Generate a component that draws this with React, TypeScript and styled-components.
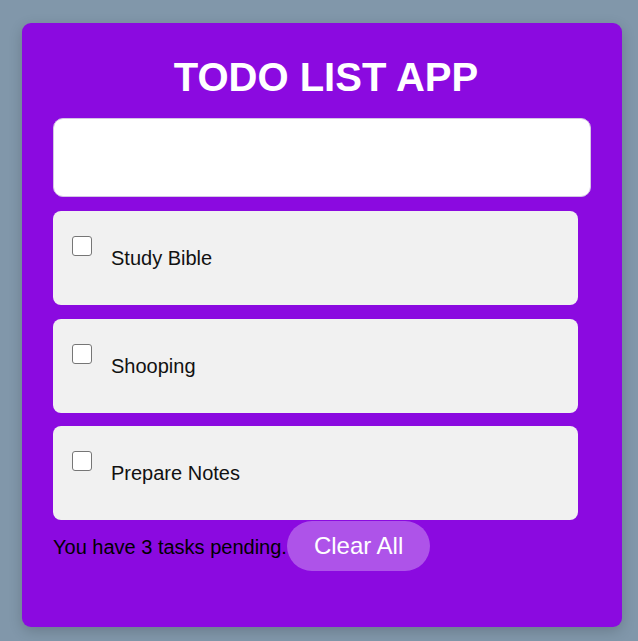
import styled, { createGlobalStyle } from "styled-components";

const GlobalStyle = createGlobalStyle`
  body {
    margin: 0;
    background-color: #8197aa;
    font-family: "Liberation Sans", Arial, sans-serif;
  }
`;

const Page = styled.div`
  padding: 23px 16px 14px 22px;
`;

const Card = styled.div`
  width: 600px;
  box-sizing: border-box;
  background-color: #8b0ae0;
  border-radius: 9px;
  padding: 31px 31px 56px 31px;
  box-shadow: 0 4px 14px rgba(0, 0, 0, 0.18);
`;

const Title = styled.h1`
  margin: 0 0 18px;
  padding-left: 8px;
  text-align: center;
  color: #ffffff;
  font-size: 40px;
  font-weight: bold;
  line-height: 46px;
`;

const TaskInput = styled.input`
  display: block;
  width: 100%;
  height: 79px;
  box-sizing: border-box;
  border: 1px solid #d4c4e4;
  border-radius: 10px;
  background: #ffffff;
  font-family: inherit;
  font-size: 20px;
  padding: 0 20px;
  outline: none;
`;

const TaskList = styled.ul`
  list-style: none;
  margin: 14px 0 0;
  padding: 0;
  display: flex;
  flex-direction: column;
  gap: 13.5px;
  width: 525px;
`;

const TaskItem = styled.li`
  display: flex;
  align-items: flex-start;
  height: 94px;
  box-sizing: border-box;
  padding: 25px 19px 0;
  background-color: #f1f1f1;
  border-radius: 8px;
`;

const Check = styled.input`
  appearance: none;
  width: 20px;
  height: 20px;
  margin: 0 19px 0 0;
  box-sizing: border-box;
  border: 1px solid #767676;
  border-radius: 3px;
  background: #ffffff;
  flex-shrink: 0;
`;

const TaskText = styled.span`
  margin-top: 11px;
  font-size: 20px;
  line-height: 23px;
  color: #111111;
`;

const Footer = styled.div`
  margin-top: 1px;
  font-size: 20px;
  color: #000000;
`;

const ClearButton = styled.button`
  display: inline-block;
  border: none;
  border-radius: 25px;
  background-color: rgba(255, 255, 255, 0.3);
  color: #ffffff;
  font-family: inherit;
  font-size: 24px;
  line-height: 28px;
  padding: 11px 27px;
  cursor: pointer;
`;

const tasks = ["Study Bible", "Shooping", "Prepare Notes"];

export default function App() {
  return (
    <Page>
      <GlobalStyle />
      <Card>
        <Title>TODO LIST APP</Title>
        <TaskInput type="text" />
        <TaskList>
          {tasks.map((task) => (
            <TaskItem key={task}>
              <Check type="checkbox" />
              <TaskText>{task}</TaskText>
            </TaskItem>
          ))}
        </TaskList>
        <Footer>
          You have {tasks.length} tasks pending.
          <ClearButton>Clear All</ClearButton>
        </Footer>
      </Card>
    </Page>
  );
}
